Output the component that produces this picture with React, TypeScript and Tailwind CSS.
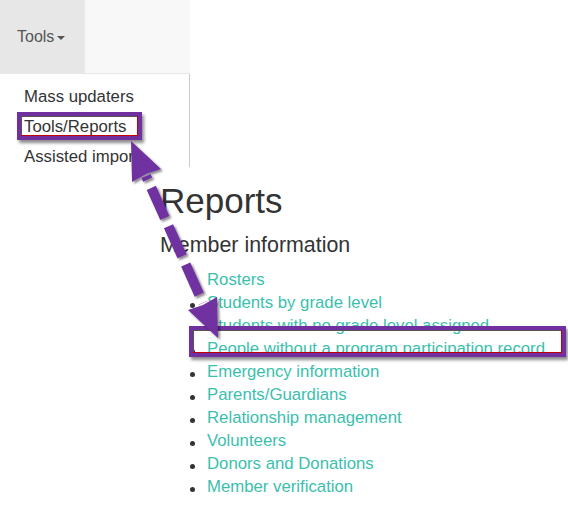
import React from 'react';

const reportLinks = [
  'Rosters',
  'Students by grade level',
  'Students with no grade level assigned',
  'People without a program participation record',
  'Emergency information',
  'Parents/Guardians',
  'Relationship management',
  'Volunteers',
  'Donors and Donations',
  'Member verification',
];

const menuItems = ['Mass updaters', 'Tools/Reports', 'Assisted import'];

function Callout() {
  return (
    <svg className="pointer-events-none absolute left-0 top-0" width="568" height="508" viewBox="0 0 568 508">
      <defs>
        <filter id="drop" x="-20%" y="-20%" width="140%" height="140%">
          <feDropShadow dx="2" dy="2" stdDeviation="1.2" floodColor="#000" floodOpacity="0.45" />
        </filter>
      </defs>
      <g filter="url(#drop)" fill="#7030a0">
        {/* dashed stem */}
        <line
          x1="146"
          y1="176"
          x2="203"
          y2="303"
          stroke="#7030a0"
          strokeWidth="10"
          strokeDasharray="33 9"
          strokeDashoffset="29"
        />
        {/* top head */}
        <polygon points="131,141 161,169 146,174 132,182" />
        {/* bottom head */}
        <polygon points="218,338 188,310 203,305 217,297" />
      </g>
    </svg>
  );
}

export default function App() {
  return (
    <div className="relative h-[508px] w-[568px] overflow-hidden bg-white font-['Liberation_Sans',Arial,sans-serif] text-[#333]">
      {/* Navbar */}
      <div className="flex h-[74px] w-[190px] border-b border-[#e7e7e7] bg-[#f8f8f8]">
        <div className="flex w-[85px] items-center bg-[#e7e7e7] pl-[17px] text-[16px] text-[#555]">
          Tools
          <span className="ml-[3px] mt-[2px] h-0 w-0 border-x-[4px] border-t-[4px] border-x-transparent border-t-[#555]" />
        </div>
      </div>

      {/* Dropdown */}
      <div className="h-[93px] w-[190px] overflow-hidden border-r border-[#ccc] bg-white pt-[8px]">
        {menuItems.map((item) => (
          <div key={item} className="pl-[24px] text-[16.75px] leading-[30px] whitespace-nowrap">
            {item}
          </div>
        ))}
      </div>

      {/* Content */}
      <div className="ml-[160px] mt-[15px]">
        <h1 className="text-[35px] leading-[38.5px]">Reports</h1>
        <h3 className="mt-[13px] text-[21.4px] leading-[23.5px]">Member information</h3>
        <ul className="mt-[11px] pl-[30px]">
          {reportLinks.map((link) => (
            <li key={link} className="flex items-start text-[16.75px] leading-[23px] whitespace-nowrap">
              <span className="mr-[12px] mt-[12px] h-[5px] w-[5px] shrink-0 rounded-full bg-[#333]" />
              <a href="#" className="text-[#3bbfad]">
                {link}
              </a>
            </li>
          ))}
        </ul>
      </div>

      {/* Annotation boxes */}
      <div className="absolute left-[17px] top-[112px] h-[28px] w-[125px] border-[4px] border-[#7030a0] shadow-[inset_-1px_-1px_0_#c00000,inset_1px_1px_0_#555,2px_3px_3px_rgba(0,0,0,0.45)]" />
      <div className="absolute left-[189px] top-[326px] h-[31px] w-[377px] border-[4px] border-[#7030a0] shadow-[inset_-1px_-1px_0_#c00000,inset_1px_1px_0_#555,2px_3px_3px_rgba(0,0,0,0.45)]" />

      <Callout />
    </div>
  );
}
